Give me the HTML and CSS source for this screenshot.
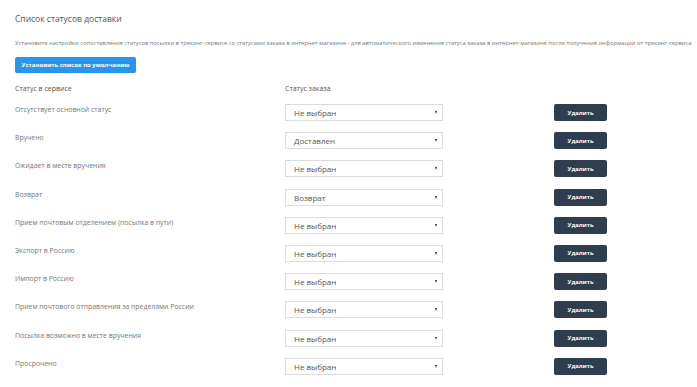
FILE: index.html
```html
<!DOCTYPE html>
<html lang="ru">
<head>
    <meta charset="UTF-8">
    <title>Список статусов доставки</title>
    <link rel="stylesheet" href="styles.css">
</head>
<body>

<div class="statuses">
    <h2>Список статусов доставки</h2>
    <p class="hint">Установите настройки сопоставления статусов посылки в трекинг-сервисе со статусами заказа в интернет-магазине - для автоматического изменения статуса заказа в интернет-магазине после получения информации от трекинг-сервиса</p>

    <button class="btn-default">Установить список по умолчанию</button>

    <div class="status-table">
        <div class="head">Статус в сервисе</div>
        <div class="head">Статус заказа</div>
        <div class="head"></div>

        <div class="name">Отсутствует основной статус</div>
        <div class="cell"><div class="select">Не выбран<span class="arrow"></span></div></div>
        <div class="cell"><button class="btn-delete">Удалить</button></div>

        <div class="name">Вручено</div>
        <div class="cell"><div class="select">Доставлен<span class="arrow"></span></div></div>
        <div class="cell"><button class="btn-delete">Удалить</button></div>

        <div class="name">Ожидает в месте вручения</div>
        <div class="cell"><div class="select">Не выбран<span class="arrow"></span></div></div>
        <div class="cell"><button class="btn-delete">Удалить</button></div>

        <div class="name">Возврат</div>
        <div class="cell"><div class="select">Возврат<span class="arrow"></span></div></div>
        <div class="cell"><button class="btn-delete">Удалить</button></div>

        <div class="name">Прием почтовым отделением (посылка в пути)</div>
        <div class="cell"><div class="select">Не выбран<span class="arrow"></span></div></div>
        <div class="cell"><button class="btn-delete">Удалить</button></div>

        <div class="name">Экспорт в Россию</div>
        <div class="cell"><div class="select">Не выбран<span class="arrow"></span></div></div>
        <div class="cell"><button class="btn-delete">Удалить</button></div>

        <div class="name">Импорт в Россию</div>
        <div class="cell"><div class="select">Не выбран<span class="arrow"></span></div></div>
        <div class="cell"><button class="btn-delete">Удалить</button></div>

        <div class="name">Прием почтового отправления за пределами России</div>
        <div class="cell"><div class="select">Не выбран<span class="arrow"></span></div></div>
        <div class="cell"><button class="btn-delete">Удалить</button></div>

        <div class="name">Посылка возможно в месте вручения</div>
        <div class="cell"><div class="select">Не выбран<span class="arrow"></span></div></div>
        <div class="cell"><button class="btn-delete">Удалить</button></div>

        <div class="name">Просрочено</div>
        <div class="cell"><div class="select">Не выбран<span class="arrow"></span></div></div>
        <div class="cell"><button class="btn-delete">Удалить</button></div>
    </div>
</div>

</body>
</html>
```

FILE: styles.css
```css
body {
    margin: 0;
    padding: 0;
    font-family: 'Open Sans', 'Noto Sans', sans-serif;
    background: #fff;
    color: #555;
}

.statuses {
    padding: 12px 15px 0 15px;
}

h2 {
    margin: 0;
    font-size: 8.5px;
    font-weight: 400;
    color: #555;
    line-height: 14px;
}

.hint {
    margin: 13px 0 0 0;
    font-size: 5.8px;
    line-height: 8px;
    color: #777;
    white-space: nowrap;
}

.btn-default {
    display: block;
    margin-top: 10px;
    width: 121px;
    height: 16px;
    padding: 0;
    background-color: #2b95ec;
    border: none;
    border-radius: 2px;
    font-family: inherit;
    font-size: 6px;
    font-weight: 700;
    color: #fff;
    cursor: pointer;
}

.status-table {
    margin-top: 11px;
    display: grid;
    grid-template-columns: 270px 269px 53px;
    grid-template-rows: 20px;
    grid-auto-rows: 28.2px;
}

.status-table .head {
    font-size: 7px;
    color: #555;
    line-height: 10px;
}

.name {
    padding-top: 2px;
    font-size: 6.9px;
    color: #777;
    line-height: 8px;
}

.cell {
    display: flex;
    align-items: flex-start;
}

.select {
    position: relative;
    box-sizing: border-box;
    width: 158px;
    height: 17px;
    padding-left: 8px;
    border: 1px solid #ddd;
    font-size: 8px;
    line-height: 15px;
    color: #555;
}

.arrow {
    position: absolute;
    right: 5px;
    top: 6px;
    width: 0;
    height: 0;
    border-left: 1.5px solid transparent;
    border-right: 1.5px solid transparent;
    border-top: 3px solid #333;
}

.btn-delete {
    display: block;
    width: 53px;
    height: 17px;
    padding: 0;
    background-color: #2e3e4f;
    border: none;
    border-radius: 2px;
    font-family: inherit;
    font-size: 5.8px;
    font-weight: 700;
    color: #fff;
    cursor: pointer;
}
```
